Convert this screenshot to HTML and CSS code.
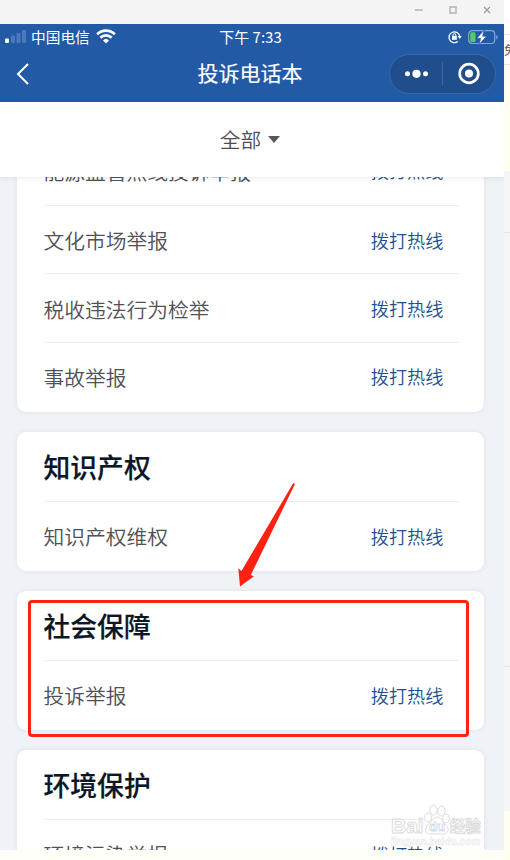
FILE: index.html
```html
<!DOCTYPE html>
<html lang="zh-CN">
<head>
    <meta charset="UTF-8">
    <title>投诉电话本</title>
    <link rel="stylesheet" href="styles.css">
</head>
<body>
    <div class="phone">
        <div class="window-bar">
            <svg width="90" height="24" viewBox="0 0 90 24" fill="none">
                <path d="M0 10h8" stroke="#c4c4c4" stroke-width="2"/>
                <rect x="35" y="7" width="6" height="6" stroke="#b8b8b8" stroke-width="1.6"/>
                <path d="M69 7l6 6M75 7l-6 6" stroke="#999" stroke-width="1.1"/>
            </svg>
        </div>
        <header class="header">
            <div class="status-bar">
                <div class="status-left">
                    <svg width="22" height="15" viewBox="0 0 22 15" fill="#4b7abb">
                        <rect x="0" y="9.5" width="4" height="4.5" rx="1" fill="#fff"/>
                        <rect x="6" y="6.5" width="4" height="7.5" rx="1"/>
                        <rect x="11.5" y="4" width="4" height="10" rx="1"/>
                        <rect x="17" y="1" width="4" height="13" rx="1"/>
                    </svg>
                    <span class="carrier">中国电信</span>
                    <svg width="20" height="15" viewBox="0 0 20 15" fill="none" stroke="#fff" stroke-width="2.7">
                        <path d="M1.2 5.2a12.4 12.4 0 0 1 17.6 0"/>
                        <path d="M4.4 8.7a8 8 0 0 1 11.2 0"/>
                        <path d="M10 14.6L7 11.5a4.3 4.3 0 0 1 6 0z" fill="#fff" stroke="none"/>
                    </svg>
                </div>
                <div class="clock">下午 7:33</div>
                <div class="status-right">
                    <svg width="14" height="14" viewBox="0 0 14 14" fill="none" stroke="#fff" stroke-width="1.3">
                        <path d="M9.8 11.5A5.4 5.4 0 1 1 11.7 6"/>
                        <path d="M9.6 6h4.2l-2 3z" fill="#fff" stroke="none"/>
                        <rect x="4" y="6" width="4.8" height="3.8" fill="#fff" stroke="none"/>
                        <path d="M5 6V5a1.4 1.4 0 0 1 2.8 0v1" stroke-width="1"/>
                    </svg>
                    <svg width="30" height="16" viewBox="0 0 30 16">
                        <rect x=".7" y="1.7" width="26" height="12.8" rx="3.5" fill="none" stroke="#87a7d3" stroke-width="1.2"/>
                        <path d="M28.3 6v4.4q1.4-.6 1.4-2.2T28.3 6z" fill="#87a7d3"/>
                        <rect x="2.3" y="3.3" width="5.2" height="9.8" rx="1.2" fill="#4fcf62"/>
                        <path d="M16.2 1L8.8 9.3h3.8L11 15.6L18.6 7.2h-4z" fill="#fff" stroke="#235aa6" stroke-width=".7"/>
                    </svg>
                </div>
            </div>
            <div class="nav-bar">
                <svg class="back" width="14" height="22" viewBox="0 0 14 22" fill="none" stroke="#fff" stroke-width="2">
                    <path d="M12 1L2 11l10 10"/>
                </svg>
                <h1 class="title">投诉电话本</h1>
                <div class="capsule">
                    <svg width="105" height="38" viewBox="0 0 105 38" fill="#fff">
                        <circle cx="17.5" cy="18.8" r="2.5"/>
                        <circle cx="26.5" cy="18.8" r="4.1"/>
                        <circle cx="35.5" cy="18.8" r="2.5"/>
                        <path d="M52.5 7v23" stroke="#376aad" stroke-width="1"/>
                        <circle cx="79" cy="18.5" r="9.3" fill="none" stroke="#fff" stroke-width="2.7"/>
                        <circle cx="79" cy="18.5" r="4"/>
                    </svg>
                </div>
            </div>
        </header>
        <div class="filter">
            <span>全部</span>
            <i class="caret"></i>
        </div>
        <main class="list">
            <section class="card card-first">
                <div class="row"><span>能源监管热线投诉举报</span><a class="call">拨打热线</a></div>
                <div class="row"><span>文化市场举报</span><a class="call">拨打热线</a></div>
                <div class="row"><span>税收违法行为检举</span><a class="call">拨打热线</a></div>
                <div class="row"><span>事故举报</span><a class="call">拨打热线</a></div>
            </section>
            <section class="card">
                <h2>知识产权</h2>
                <div class="row"><span>知识产权维权</span><a class="call">拨打热线</a></div>
            </section>
            <section class="card">
                <h2>社会保障</h2>
                <div class="row"><span>投诉举报</span><a class="call">拨打热线</a></div>
            </section>
            <section class="card">
                <h2>环境保护</h2>
                <div class="row"><span>环境污染举报</span><a class="call">拨打热线</a></div>
            </section>
        </main>
    </div>

    <!-- sliver of the page behind the window -->
    <aside class="behind">
        <div class="behind-top"></div>
        <div class="behind-text"><span>免</span></div>
        <div class="behind-yellow"></div>
        <div class="behind-gray"></div>
        <div class="behind-gray2"></div>
        <div class="behind-gray3"></div>
    </aside>

    <div class="highlight"></div>
    <svg class="arrow" width="60" height="108" viewBox="0 0 60 108">
        <path d="M57.3 3L59 4L14.8 95L18 96.3L4 106.5L2.3 88.2L5.5 91Z" fill="#ff2213"/>
    </svg>

    <div class="watermark">
        <div class="mark-logo">
            <span>Bai</span>
            <svg width="26" height="31" viewBox="0 0 26 31">
                <g fill="#fff" stroke="#d8d8d8" stroke-width="1">
                    <ellipse cx="4" cy="13.5" rx="3.4" ry="4.4"/>
                    <ellipse cx="9.5" cy="6" rx="3.6" ry="5"/>
                    <ellipse cx="17.5" cy="7" rx="3.6" ry="5"/>
                    <ellipse cx="22" cy="14.5" rx="3.3" ry="4.3"/>
                    <path d="M13 13c4 0 5 5 9 8 4 4 2 9-3 9-3 0-9-.5-12 0C2 31 0 26 3 22c4-4 6-9 10-9z"/>
                </g>
                <text x="13" y="27" text-anchor="middle">du</text>
            </svg>
            <span class="mark-cn">经验</span>
        </div>
        <div class="mark-url">jingyan.baidu.com</div>
    </div>
</body>
</html>
```
FILE: styles.css
```css
* {
    box-sizing: border-box;
}

body {
    margin: 0;
    width: 510px;
    height: 860px;
    display: flex;
    position: relative;
    overflow: hidden;
    background: #fffffa;
    font-family: "Noto Sans CJK SC", sans-serif;
}

.phone {
    width: 504px;
    height: 850px;
    display: flex;
    flex-direction: column;
    overflow: hidden;
    background: #eff3f7;
}

.window-bar {
    height: 24px;
    flex-shrink: 0;
    display: flex;
    justify-content: flex-end;
    background: #f4f4f4;
}

.window-bar svg {
    margin-right: -1px;
}

/* header */
.header {
    height: 78px;
    flex-shrink: 0;
    background: #235aa6;
    color: #fff;
}

.status-bar {
    height: 25px;
    padding: 0 6px 0 5px;
    display: grid;
    grid-template-columns: 1fr auto 1fr;
    align-items: center;
}

.status-left,
.status-right {
    display: flex;
    align-items: center;
}

.status-right {
    justify-content: flex-end;
    gap: 6px;
}

.carrier {
    font-size: 14.7px;
    margin: 0 6px 0 4px;
}

.clock {
    font-size: 15px;
    font-weight: 400;
    margin-right: 2px;
}

.nav-bar {
    height: 49px;
    padding: 0 8px 0 4px;
    display: grid;
    grid-template-columns: 1fr auto 1fr;
    align-items: center;
}

.back {
    margin-left: 12px;
}

.title {
    margin: 0 0 3px;
    font-size: 21px;
    font-weight: 400;
    line-height: 30px;
    -webkit-text-stroke: 0.15px #fff;
}

.capsule {
    justify-self: end;
    width: 107px;
    height: 40px;
    border: 1px solid #376aad;
    border-radius: 20px;
    background: #204e8d;
}

/* filter */
.filter {
    height: 75px;
    flex-shrink: 0;
    display: flex;
    align-items: center;
    justify-content: center;
    gap: 7px;
    position: relative;
    padding: 0 4px 1px 0;
    background: #fff;
    color: #4c4d55;
    font-size: 20.7px;
    font-weight: 350;
    box-shadow: 0 1px 4px rgba(40, 60, 90, 0.1);
}

.caret {
    border: 6px solid transparent;
    border-top: 7px solid #555861;
    border-bottom: 0;
}

/* cards */
.list {
    flex: 1;
    min-height: 0;
    overflow: hidden;
    padding: 0 20px 0 16.5px;
}

.card {
    margin-bottom: 19.7px;
    padding: 0 26.5px 0 27px;
    background: #fff;
    border-radius: 9px;
    box-shadow: 0 0 5px rgba(40, 60, 90, 0.09);
}

.card-first {
    margin-top: -41px;
}

.card h2 {
    margin: 0;
    height: 69.6px;
    line-height: 69px;
    font-size: 26.8px;
    font-weight: 500;
    color: #0b1727;
    -webkit-text-stroke: 0.2px #0b1727;
}

.row {
    height: 68.7px;
    display: flex;
    align-items: center;
    justify-content: space-between;
    padding: 1px 14px 0 0;
    font-size: 20.75px;
    font-weight: 350;
    color: #505056;
}

.row + .row,
h2 + .row {
    border-top: 1.5px solid #ebedef;
}

.row:last-child {
    height: 69.8px;
    padding: 0 14px 1px 0;
}

.call {
    font-size: 18.2px;
    color: #1f4f8f;
    padding-bottom: 1px;
}

/* strip on the right */
.behind {
    width: 6px;
    height: 860px;
    overflow: hidden;
    background: #fffff0;
}

.behind-top {
    height: 35px;
    background: #fff;
    border-bottom: 1px solid #e4e4e4;
}

.behind-text {
    height: 30px;
    line-height: 29px;
    background: #fff;
    border-bottom: 1px solid #e4e4e4;
    font-size: 12px;
    color: #555;
    overflow: hidden;
}

.behind-yellow {
    height: 106px;
}

.behind-gray,
.behind-gray2,
.behind-gray3 {
    background: #f5f5f5;
}

.behind-gray {
    height: 62px;
    border-bottom: 1px solid #e4e4e4;
}

.behind-gray2 {
    height: 434px;
    border-bottom: 1px solid #e8e6e6;
}

.behind-gray3 {
    height: 144px;
}

/* annotations */
.highlight {
    position: absolute;
    left: 28px;
    top: 600px;
    width: 441px;
    height: 137px;
    border: 3px solid #ff2213;
    border-radius: 4px;
}

.arrow {
    position: absolute;
    left: 236px;
    top: 480px;
}

.watermark {
    position: absolute;
    left: 391px;
    top: 804px;
    width: 92px;
    font-family: "Liberation Sans", sans-serif;
    font-weight: 700;
    color: #fff;
    opacity: 0.85;
}

.mark-logo {
    height: 31px;
    display: flex;
    align-items: flex-end;
    font-size: 21px;
    line-height: 19px;
    -webkit-text-stroke: 1px #d8d8d8;
}

.mark-logo text {
    font-size: 13px;
    fill: #fff;
    stroke: #d0d0d0;
    stroke-width: 0.8px;
    -webkit-text-stroke: 0;
}

.mark-cn {
    font-family: "Noto Sans CJK SC", sans-serif;
    font-size: 15.5px;
}

.mark-url {
    font-size: 10.2px;
    line-height: 13px;
    -webkit-text-stroke: 0.5px #e4e4e4;
}
```
